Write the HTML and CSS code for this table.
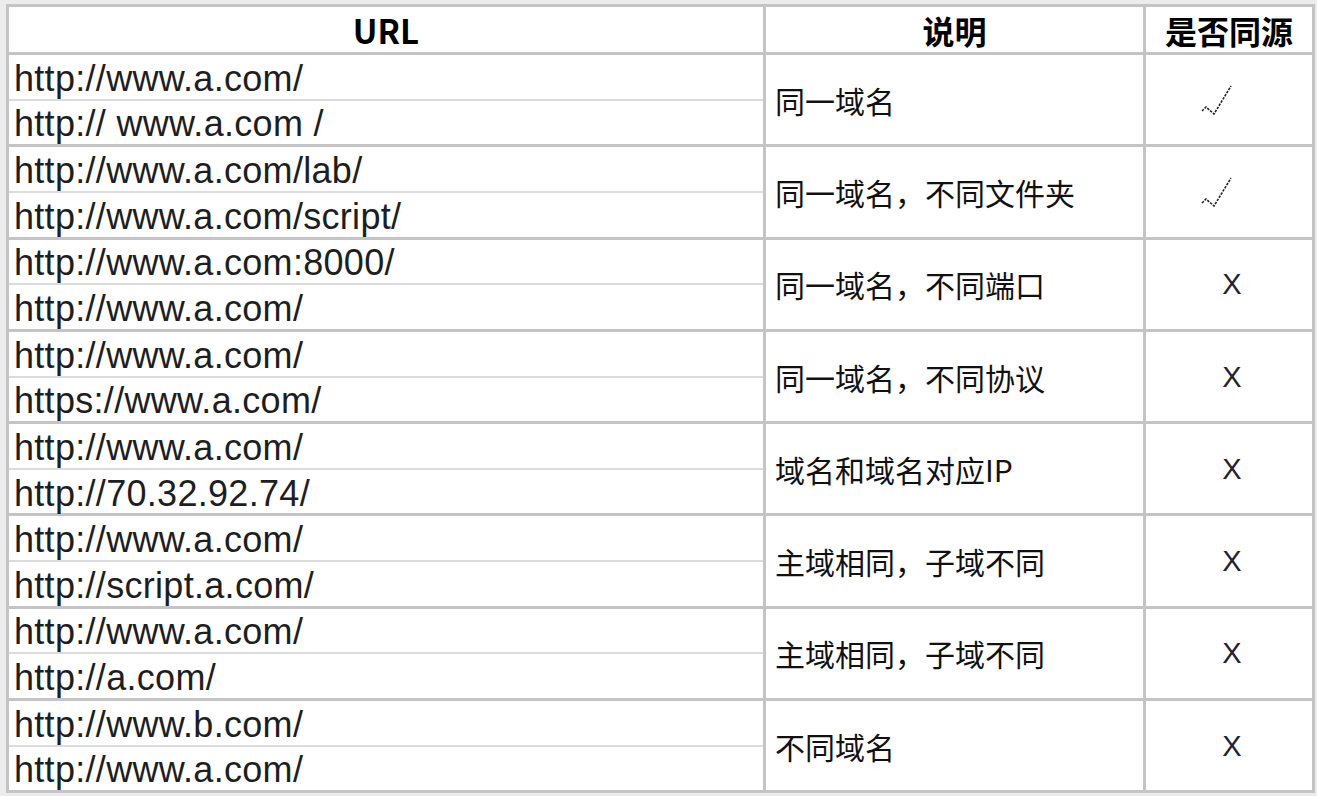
FILE: index.html
```html
<!DOCTYPE html>
<html lang="zh-CN">
<head>
<meta charset="utf-8">
<title>同源策略</title>
<link rel="stylesheet" href="styles.css">
</head>
<body>
<div class="frame">
  <div class="sheet">
    <div class="cell head head-url">URL</div>
    <div class="cell head">说明</div>
    <div class="cell head">是否同源</div>

    <div class="cell urls"><div class="sub">http://www.a.com/</div><div class="sub">http:// www.a.com /</div></div>
    <div class="cell desc">同一域名</div>
    <div class="cell res"><svg class="check" viewBox="0 0 32 30" width="32" height="30"><polyline points="1,26 5,22 13,29 30,1"/></svg></div>

    <div class="cell urls"><div class="sub">http://www.a.com/lab/</div><div class="sub">http://www.a.com/script/</div></div>
    <div class="cell desc">同一域名，不同文件夹</div>
    <div class="cell res"><svg class="check" viewBox="0 0 32 30" width="32" height="30"><polyline points="1,26 5,22 13,29 30,1"/></svg></div>

    <div class="cell urls"><div class="sub">http://www.a.com:8000/</div><div class="sub">http://www.a.com/</div></div>
    <div class="cell desc">同一域名，不同端口</div>
    <div class="cell res"><span class="no">X</span></div>

    <div class="cell urls"><div class="sub">http://www.a.com/</div><div class="sub">https://www.a.com/</div></div>
    <div class="cell desc">同一域名，不同协议</div>
    <div class="cell res"><span class="no">X</span></div>

    <div class="cell urls"><div class="sub">http://www.a.com/</div><div class="sub">http://70.32.92.74/</div></div>
    <div class="cell desc">域名和域名对应IP</div>
    <div class="cell res"><span class="no">X</span></div>

    <div class="cell urls"><div class="sub">http://www.a.com/</div><div class="sub">http://script.a.com/</div></div>
    <div class="cell desc">主域相同，子域不同</div>
    <div class="cell res"><span class="no">X</span></div>

    <div class="cell urls"><div class="sub">http://www.a.com/</div><div class="sub">http://a.com/</div></div>
    <div class="cell desc">主域相同，子域不同</div>
    <div class="cell res"><span class="no">X</span></div>

    <div class="cell urls"><div class="sub">http://www.b.com/</div><div class="sub">http://www.a.com/</div></div>
    <div class="cell desc">不同域名</div>
    <div class="cell res"><span class="no">X</span></div>
  </div>
</div>
</body>
</html>
```
FILE: styles.css
```css
html, body {
  margin: 0;
  padding: 0;
  background: #ffffff;
}

.frame {
  width: 1317px;
  height: 796px;
  box-sizing: border-box;
  padding: 4px 0 0 6px;
  background: #ececec;
  overflow: hidden;
}

.sheet {
  display: grid;
  grid-template-columns: 754px 377px 166px;
  grid-template-rows: 45px repeat(8, 89.3px);
  gap: 3px;
  border: 3px solid #c4c4c4;
  background: #c4c4c4;
  width: max-content;
}

.cell {
  background: #ffffff;
  color: #111111;
  display: flex;
  align-items: center;
  min-width: 0;
  min-height: 0;
}

.head {
  justify-content: center;
  font-family: "Noto Sans CJK SC", sans-serif;
  font-weight: 700;
  font-size: 32px;
  line-height: 42px;
  color: #000000;
}

.head-url {
  font-size: 33px;
}

.urls {
  flex-direction: column;
  align-items: stretch;
}

.sub {
  flex: 1;
  display: flex;
  align-items: flex-end;
  padding: 0 0 0 5px;
  font-family: "Liberation Sans", Arial, sans-serif;
  font-size: 36px;
  line-height: 40px;
  letter-spacing: 0.3px;
  color: #1e1e1e;
  white-space: pre;
}

.sub:first-child {
  border-bottom: 2px solid #dcdcdc;
}

.desc {
  padding-left: 9px;
  font-family: "Noto Sans CJK SC", sans-serif;
  font-size: 30px;
  line-height: 40px;
  color: #111111;
}

.res {
  justify-content: center;
}

.check {
  margin-right: 24px;
  fill: none;
  stroke: #222222;
  stroke-width: 1.6;
  stroke-dasharray: 2.5 1.2;
}

.no {
  font-family: "Liberation Sans", Arial, sans-serif;
  font-size: 29px;
  line-height: 36px;
  margin-left: 6px;
  color: #222233;
}
```
